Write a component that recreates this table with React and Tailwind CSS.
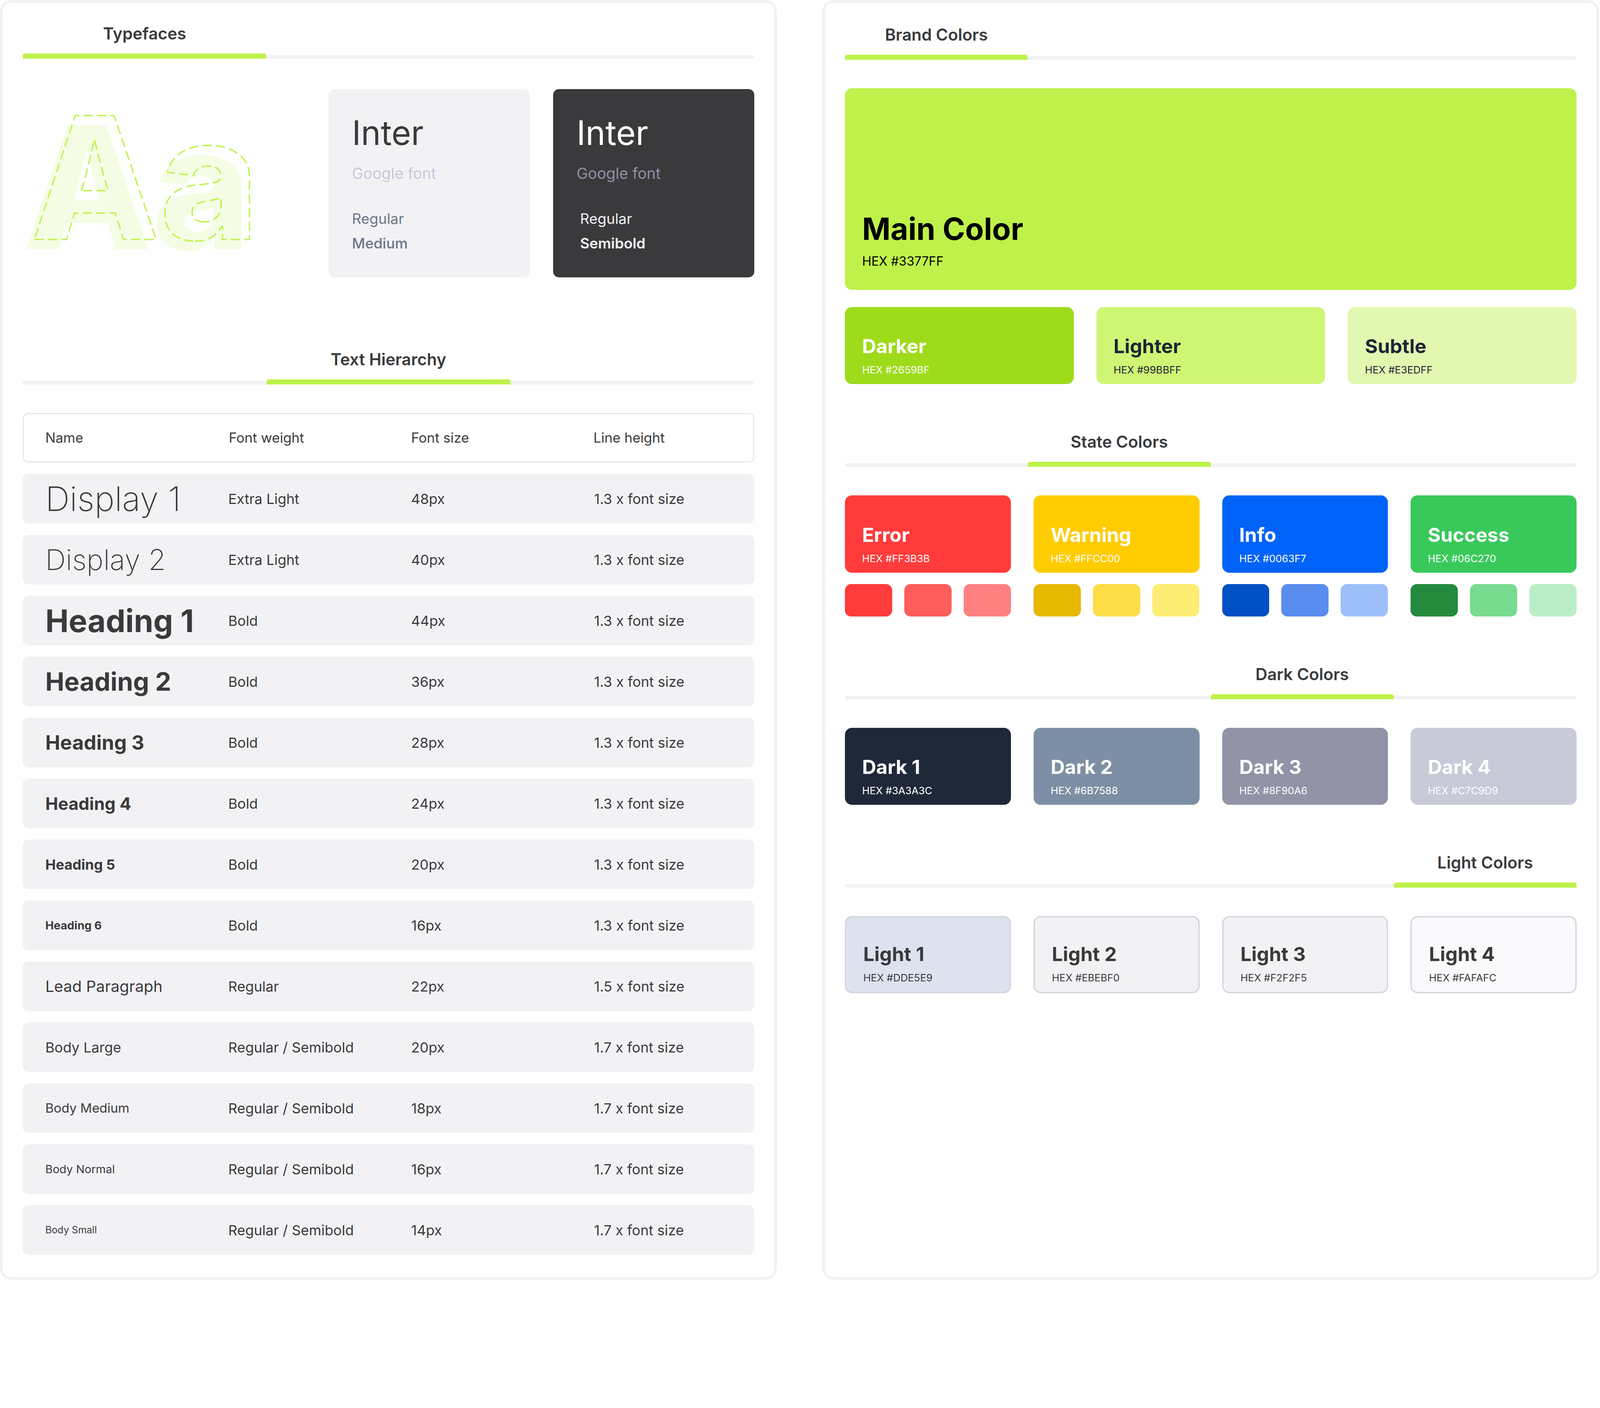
import React from "react";

const FONT = { fontFamily: '"Inter", "Noto Sans", sans-serif' };

function Tab({ title, cols, active }) {
  const idx = Array.from({ length: cols }, (_, i) => i);
  const gridCls = cols === 3 ? "grid grid-cols-3" : "grid grid-cols-4";
  return (
    <div className="flex flex-col">
      <div className={gridCls}>
        {idx.map((i) => (
          <div
            key={i}
            className="flex h-[55px] items-center justify-center text-[42px] font-semibold leading-[55px] text-[#3a3a3c] whitespace-nowrap"
          >
            {i === active ? title : null}
          </div>
        ))}
      </div>
      <div className={`${gridCls} mt-[24px] h-[13px] items-end`}>
        {idx.map((i) =>
          i === active ? (
            <div key={i} className="h-[13px] rounded-t-[6px] bg-[#bef24a]" />
          ) : (
            <div key={i} className="h-[9px] bg-[#f2f2f5]" />
          )
        )}
      </div>
    </div>
  );
}

function ColorCard({ bg, title, hex, text, border }) {
  return (
    <div
      className={`flex h-[197px] flex-col justify-end rounded-[18px] px-[44px] pb-[19px] ${bg} ${text} ${
        border ? "border-[3px] border-[#cfd1dd]" : ""
      }`}
    >
      <div className="text-[50px] font-bold leading-[60px] whitespace-nowrap">{title}</div>
      <div className="mt-[13px] text-[26px] leading-[35px] whitespace-nowrap">{hex}</div>
    </div>
  );
}

const rows = [
  { name: "Display 1", cls: "text-[87px] font-extralight", w: "Extra Light", s: "48px", lh: "1.3 x font size" },
  { name: "Display 2", cls: "text-[73px] font-extralight", w: "Extra Light", s: "40px", lh: "1.3 x font size" },
  { name: "Heading 1", cls: "text-[80px] font-bold", w: "Bold", s: "44px", lh: "1.3 x font size" },
  { name: "Heading 2", cls: "text-[65px] font-bold", w: "Bold", s: "36px", lh: "1.3 x font size" },
  { name: "Heading 3", cls: "text-[51px] font-bold", w: "Bold", s: "28px", lh: "1.3 x font size" },
  { name: "Heading 4", cls: "text-[44px] font-bold", w: "Bold", s: "24px", lh: "1.3 x font size" },
  { name: "Heading 5", cls: "text-[36px] font-bold", w: "Bold", s: "20px", lh: "1.3 x font size" },
  { name: "Heading 6", cls: "text-[29px] font-bold", w: "Bold", s: "16px", lh: "1.3 x font size" },
  { name: "Lead Paragraph", cls: "text-[40px] font-normal", w: "Regular", s: "22px", lh: "1.5 x font size" },
  { name: "Body Large", cls: "text-[36px] font-normal", w: "Regular / Semibold", s: "20px", lh: "1.7 x font size" },
  { name: "Body Medium", cls: "text-[33px] font-normal", w: "Regular / Semibold", s: "18px", lh: "1.7 x font size" },
  { name: "Body Normal", cls: "text-[29px] font-normal", w: "Regular / Semibold", s: "16px", lh: "1.7 x font size" },
  { name: "Body Small", cls: "text-[25px] font-normal", w: "Regular / Semibold", s: "14px", lh: "1.7 x font size" },
];

const states = [
  { title: "Error", hex: "HEX #FF3B3B", bg: "bg-[#ff3b3b]", sw: ["bg-[#ff3b3b]", "bg-[#ff5c5c]", "bg-[#ff8080]"] },
  { title: "Warning", hex: "HEX #FFCC00", bg: "bg-[#ffcc00]", sw: ["bg-[#e6b800]", "bg-[#fddd48]", "bg-[#fded72]"] },
  { title: "Info", hex: "HEX #0063F7", bg: "bg-[#0063f7]", sw: ["bg-[#004fc4]", "bg-[#5b8def]", "bg-[#9dbff9]"] },
  { title: "Success", hex: "HEX #06C270", bg: "bg-[#39c95b]", sw: ["bg-[#248a3d]", "bg-[#79db90]", "bg-[#bbeec6]"] },
];

const darks = [
  { title: "Dark 1", hex: "HEX #3A3A3C", bg: "bg-[#1e2838]" },
  { title: "Dark 2", hex: "HEX #6B7588", bg: "bg-[#7d8fa4]" },
  { title: "Dark 3", hex: "HEX #8F90A6", bg: "bg-[#9293a6]" },
  { title: "Dark 4", hex: "HEX #C7C9D9", bg: "bg-[#c8cad8]" },
];

const lights = [
  { title: "Light 1", hex: "HEX #DDE5E9", bg: "bg-[#dde3ee]" },
  { title: "Light 2", hex: "HEX #EBEBF0", bg: "bg-[#f2f2f5]" },
  { title: "Light 3", hex: "HEX #F2F2F5", bg: "bg-[#f2f2f5]" },
  { title: "Light 4", hex: "HEX #FAFAFC", bg: "bg-[#fafafc]" },
];

function AaGraphic() {
  return (
    <svg width="640" height="482" viewBox="0 0 640 482" overflow="visible">
      <text
        x="0"
        y="410"
        fontFamily="Inter, sans-serif"
        fontWeight="800"
        fontSize="436"
        fill="#f4fde4"
        textLength="585"
        lengthAdjust="spacingAndGlyphs"
      >
        Aa
      </text>
      <text
        x="20"
        y="385"
        fontFamily="Inter, sans-serif"
        fontWeight="800"
        fontSize="436"
        fill="none"
        stroke="#bef24a"
        strokeWidth="3.5"
        strokeDasharray="24 11"
        textLength="585"
        lengthAdjust="spacingAndGlyphs"
      >
        Aa
      </text>
    </svg>
  );
}

export default function App() {
  return (
    <div className="flex h-[3276px] w-[4094px] gap-[116px] bg-white text-[#3a3a3c]" style={FONT}>
      {/* Left panel */}
      <div className="flex h-full w-[1989px] shrink-0 flex-col rounded-[29px] border-[7px] border-[#f2f2f5] bg-white px-[51px] pt-[51px]">
        <Tab title="Typefaces" cols={3} active={0} />
        <div className="mt-[78px] flex h-[482px] gap-[60px]">
          <div className="flex flex-1 items-start">
            <AaGraphic />
          </div>
          <div className="flex w-[515px] flex-col rounded-[15px] bg-[#f2f2f5] px-[60px] pt-[61px]">
            <div className="text-[86px] leading-[103px] text-[#3a3a3c]">Inter</div>
            <div className="mt-[26px] text-[39px] leading-[51px] text-[#c7c9d9]">Google font</div>
            <div className="mt-[59px] text-[37px] leading-[63px] text-[#6b7588]">Regular</div>
            <div className="text-[37px] font-medium leading-[63px] text-[#6b7588]">Medium</div>
          </div>
          <div className="flex w-[515px] flex-col rounded-[15px] bg-[#3a3a3c] px-[60px] pt-[61px]">
            <div className="text-[86px] leading-[103px] text-white">Inter</div>
            <div className="mt-[26px] text-[39px] leading-[51px] text-[#8f90a6]">Google font</div>
            <div className="mt-[59px] pl-[9px] text-[37px] leading-[63px] text-[#f2f2f5]">Regular</div>
            <div className="pl-[9px] text-[37px] font-semibold leading-[63px] text-[#f2f2f5]">Semibold</div>
          </div>
        </div>

        <div className="mt-[182px]">
          <Tab title="Text Hierarchy" cols={3} active={1} />
        </div>

        <div className="mt-[73px] flex flex-col gap-[29px]">
          <div className="grid h-[127px] grid-cols-4 items-center rounded-[15px] border-[3px] border-[#e3e7ef] text-[35px] text-[#3a3a3c]">
            <div className="pl-[55px]">Name</div>
            <div className="pl-[58px]">Font weight</div>
            <div className="pl-[58px]">Font size</div>
            <div className="pl-[58px]">Line height</div>
          </div>
          {rows.map((r) => (
            <div
              key={r.name}
              className="grid h-[127px] grid-cols-4 items-center rounded-[15px] bg-[#f2f2f5] text-[36px] text-[#3a3a3c]"
            >
              <div className={`pl-[58px] leading-none whitespace-nowrap ${r.cls}`}>{r.name}</div>
              <div className="pl-[58px] whitespace-nowrap">{r.w}</div>
              <div className="pl-[58px]">{r.s}</div>
              <div className="pl-[58px] whitespace-nowrap">{r.lh}</div>
            </div>
          ))}
        </div>
      </div>

      {/* Right panel */}
      <div className="flex h-full w-[1989px] shrink-0 flex-col rounded-[29px] border-[7px] border-[#f2f2f5] bg-white px-[51px] pt-[54px]">
        <Tab title="Brand Colors" cols={4} active={0} />
        <div className="mt-[73px] flex h-[516px] flex-col justify-end rounded-[18px] bg-[#bef24a] px-[44px] pb-[53px] text-black">
          <div className="text-[78px] font-bold leading-[94px]">Main Color</div>
          <div className="mt-[15px] text-[32px] leading-[41px]">HEX #3377FF</div>
        </div>
        <div className="mt-[44px] grid grid-cols-3 gap-[58px]">
          <ColorCard bg="bg-[#9ddb1b]" text="text-white" title="Darker" hex="HEX #2659BF" />
          <ColorCard bg="bg-[#cff574]" text="text-[#1c2536]" title="Lighter" hex="HEX #99BBFF" />
          <ColorCard bg="bg-[#e2f8b0]" text="text-[#1c2536]" title="Subtle" hex="HEX #E3EDFF" />
        </div>

        <div className="mt-[120px]">
          <Tab title="State Colors" cols={4} active={1} />
        </div>
        <div className="mt-[73px] grid grid-cols-4 gap-[58px]">
          {states.map((s) => (
            <div key={s.title} className="flex flex-col">
              <div className={`flex h-[198px] flex-col justify-end rounded-[18px] px-[44px] pb-[19px] text-white ${s.bg}`}>
                <div className="text-[50px] font-bold leading-[60px]">{s.title}</div>
                <div className="mt-[13px] text-[26px] leading-[35px]">{s.hex}</div>
              </div>
              <div className="mt-[29px] grid grid-cols-3 gap-[31px]">
                {s.sw.map((c, i) => (
                  <div key={i} className={`h-[83px] rounded-[16px] ${c}`} />
                ))}
              </div>
            </div>
          ))}
        </div>

        <div className="mt-[120px]">
          <Tab title="Dark Colors" cols={4} active={2} />
        </div>
        <div className="mt-[73px] grid grid-cols-4 gap-[58px]">
          {darks.map((d) => (
            <ColorCard key={d.title} bg={d.bg} text="text-white" title={d.title} hex={d.hex} />
          ))}
        </div>

        <div className="mt-[120px]">
          <Tab title="Light Colors" cols={4} active={3} />
        </div>
        <div className="mt-[73px] grid grid-cols-4 gap-[58px]">
          {lights.map((d) => (
            <ColorCard key={d.title} bg={d.bg} text="text-[#3a3a3c]" title={d.title} hex={d.hex} border />
          ))}
        </div>
      </div>
    </div>
  );
}
